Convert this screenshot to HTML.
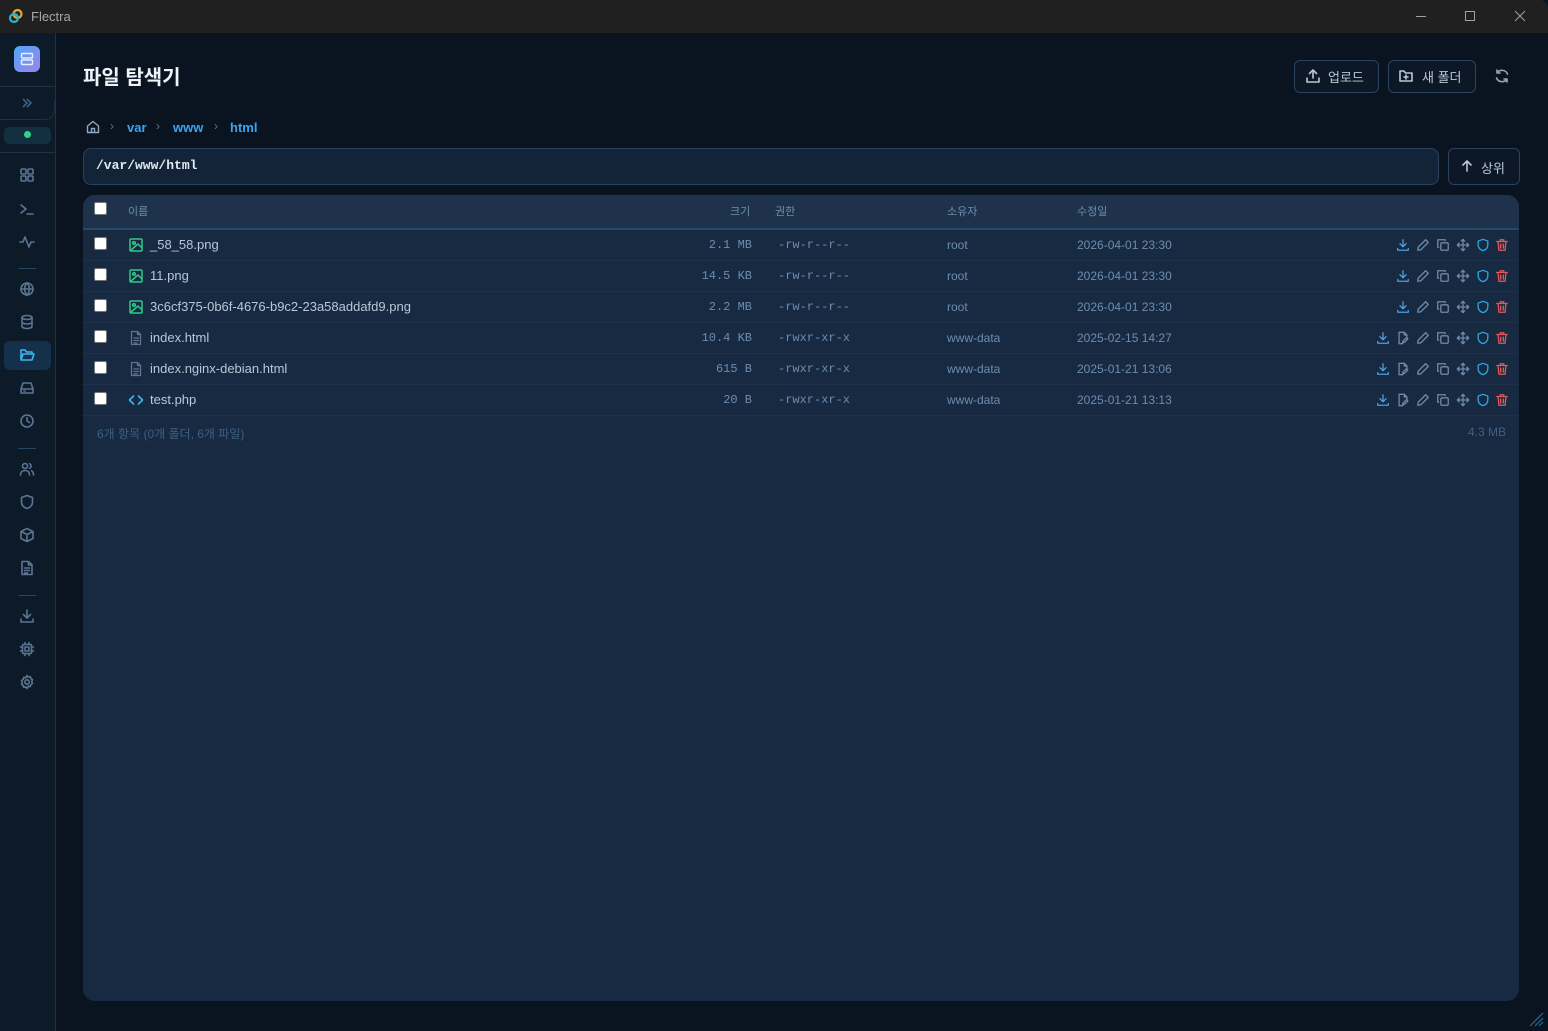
<!DOCTYPE html>
<html><head><meta charset="utf-8">
<style>
*{margin:0;padding:0;box-sizing:border-box}
body{width:1548px;height:1031px;overflow:hidden;background:#0a1420;font-family:"Liberation Sans","Noto Sans CJK KR",sans-serif;position:relative;color:#c8d4e0}
.a{position:absolute}
svg{display:block}
.ic{position:absolute;width:16px;height:16px;fill:none;stroke-width:1.6;stroke-linecap:round;stroke-linejoin:round}
.sb{stroke:#5b7593}
.mono{font-family:"Liberation Mono","DejaVu Sans Mono",monospace}
.row{position:absolute;left:83px;width:1436px;height:31px;border-bottom:1px solid #1d3249}
.cb{position:absolute;left:11px;top:7px;width:13px;height:13px;background:#fff;border:1px solid #777;border-radius:2px}
.nm{position:absolute;left:67px;top:7px;font-size:13px;color:#b9c7d6}
.sz{position:absolute;right:767px;top:8px;font-size:12px;color:#6c8db0}
.pm{position:absolute;left:695px;top:8px;font-size:12px;color:#6c8db0}
.ow{position:absolute;left:864px;top:8px;font-size:12px;color:#6c8db0}
.dt{position:absolute;left:994px;top:8px;font-size:12px;color:#6c8db0}
.btn{position:absolute;border:1px solid #2b4260;border-radius:6px;background:#0c1826;color:#b8c8da;font-size:13px}
</style></head><body>
<div class="a" style="left:0;top:0;width:1548px;height:33px;background:#202020;border-radius:0 8px 0 0"></div>
<svg class="a" style="left:8px;top:8px" width="16" height="16" viewBox="0 0 16 16"><circle cx="9.5" cy="6" r="4" fill="none" stroke="#e2a83a" stroke-width="2.2"/><circle cx="6" cy="10" r="4" fill="none" stroke="#2bb3c8" stroke-width="2.2"/></svg>
<div class="a" style="left:31px;top:9px;font-size:13px;color:#a8a8a8">Flectra</div>
<div class="a" style="left:1416px;top:16px;width:10px;height:1px;background:#a0a0a0"></div>
<div class="a" style="left:1465px;top:11px;width:10px;height:10px;border:1px solid #a0a0a0"></div>
<svg class="a" style="left:1514px;top:10px" width="12" height="12" viewBox="0 0 12 12"><path d="M1 1L11 11M11 1L1 11" stroke="#a0a0a0" stroke-width="1"/></svg>
<div class="a" style="left:0;top:33px;width:56px;height:998px;background:#0d1a28;border-right:1px solid #1e3148"></div>
<div class="a" style="left:14px;top:46px;width:26px;height:26px;border-radius:6px;background:linear-gradient(135deg,#4fa8f5,#9a82f0)"></div>
<svg class="a" style="left:19px;top:51px" width="16" height="16" viewBox="0 0 16 16" fill="none" stroke="#e8eeff" stroke-width="1.4"><rect x="2.5" y="2.5" width="11" height="4.5" rx="1"/><rect x="2.5" y="9" width="11" height="4.5" rx="1"/></svg>
<div class="a" style="left:0;top:86px;width:55px;height:1px;background:#1e3148"></div>
<div class="a" style="left:0;top:100px;width:55px;height:20px;border-bottom:1px solid #1e3148;border-right:1px solid #1e3148;border-radius:0 0 10px 0"></div>
<svg class="a" style="left:21px;top:97px" width="12" height="12" viewBox="0 0 12 12" fill="none" stroke="#3f6a94" stroke-width="1.5"><path d="M2 2l4 4-4 4M6 2l4 4-4 4"/></svg>
<div class="a" style="left:4px;top:127px;width:47px;height:17px;border-radius:5px;background:#12303f"></div>
<div class="a" style="left:24px;top:131px;width:7px;height:7px;border-radius:50%;background:#2ed388"></div>
<div class="a" style="left:0;top:152px;width:55px;height:1px;background:#1e3148"></div>
<div class="a" style="left:18px;top:268px;width:18px;height:1px;background:#284563"></div>
<div class="a" style="left:18px;top:448px;width:18px;height:1px;background:#284563"></div>
<div class="a" style="left:18px;top:595px;width:18px;height:1px;background:#284563"></div>
<div class="a" style="left:4px;top:341px;width:47px;height:29px;border-radius:6px;background:#14304a"></div>
<svg class="ic sb" style="left:19px;top:167px" viewBox="0 0 16 16"><rect x="2" y="2" width="5" height="5" rx="1"/><rect x="9" y="2" width="5" height="5" rx="1"/><rect x="2" y="9" width="5" height="5" rx="1"/><rect x="9" y="9" width="5" height="5" rx="1"/></svg>
<svg class="ic sb" style="left:19px;top:201px" viewBox="0 0 16 16"><path d="M2 4l5 4-5 4M8 13h6"/></svg>
<svg class="ic sb" style="left:19px;top:234px" viewBox="0 0 16 16"><path d="M1 8h3l2-5 4 10 2-5h3"/></svg>
<svg class="ic sb" style="left:19px;top:281px" viewBox="0 0 16 16"><circle cx="8" cy="8" r="6"/><path d="M2 8h12M8 2c3 3 3 9 0 12M8 2c-3 3-3 9 0 12"/></svg>
<svg class="ic sb" style="left:19px;top:314px" viewBox="0 0 16 16"><ellipse cx="8" cy="3.5" rx="5" ry="2"/><path d="M3 3.5v9c0 1.1 2.2 2 5 2s5-.9 5-2v-9M3 8c0 1.1 2.2 2 5 2s5-.9 5-2"/></svg>
<svg class="ic" style="left:19px;top:347px;stroke:#38b6f0" viewBox="0 0 16 16"><path d="M2 13V3h4l1.5 2H13v2M2 13l2-6h11l-2 6z"/></svg>
<svg class="ic sb" style="left:19px;top:380px" viewBox="0 0 16 16"><path d="M2 9l2-6h8l2 6v4H2zM2 9h12M5 11h1"/></svg>
<svg class="ic sb" style="left:19px;top:413px" viewBox="0 0 16 16"><circle cx="8" cy="8" r="6"/><path d="M8 4.5V8l2.5 1.5"/></svg>
<svg class="ic sb" style="left:19px;top:461px" viewBox="0 0 16 16"><circle cx="6" cy="5" r="2.5"/><path d="M1.5 14c0-3 2-4.5 4.5-4.5s4.5 1.5 4.5 4.5M10.5 2.7a2.5 2.5 0 010 4.6M12.5 9.8c1.3.6 2 2 2 4.2"/></svg>
<svg class="ic sb" style="left:19px;top:494px" viewBox="0 0 16 16"><path d="M8 1.5l5.5 2v4.5c0 3.3-2.5 5.5-5.5 6.5C5 13.5 2.5 11.3 2.5 8V3.5z"/></svg>
<svg class="ic sb" style="left:19px;top:527px" viewBox="0 0 16 16"><path d="M8 1.5l6 3v7l-6 3-6-3v-7zM2 4.5l6 3 6-3M8 7.5v7"/></svg>
<svg class="ic sb" style="left:19px;top:560px" viewBox="0 0 16 16"><path d="M3 1.5h6.5l3.5 3.5v9.5H3zM9.5 1.5V5H13M5.5 8h5M5.5 10.5h5M5.5 13h3"/></svg>
<svg class="ic sb" style="left:19px;top:608px" viewBox="0 0 16 16"><path d="M8 2v8M4.5 6.5L8 10l3.5-3.5M2 11v3h12v-3"/></svg>
<svg class="ic sb" style="left:19px;top:641px" viewBox="0 0 16 16"><rect x="3.5" y="3.5" width="9" height="9" rx="1"/><rect x="6" y="6" width="4" height="4"/><path d="M6 1.5v2M10 1.5v2M6 12.5v2M10 12.5v2M1.5 6h2M1.5 10h2M12.5 6h2M12.5 10h2"/></svg>
<svg class="ic sb" style="left:19px;top:674px" viewBox="0 0 16 16"><circle cx="8" cy="8" r="2.2"/><path d="M8 1.5l1.3 1.6 2-.5.5 2 1.7 1.1-.8 1.9.8 1.9-1.7 1.1-.5 2-2-.5L8 14.5l-1.3-1.6-2 .5-.5-2L2.5 10.3l.8-1.9-.8-1.9 1.7-1.1.5-2 2 .5z"/></svg>
<div class="a" style="left:83px;top:61px;font-size:20px;font-weight:bold;color:#eef3f8">파일 탐색기</div>
<div class="btn" style="left:1294px;top:60px;width:85px;height:33px"><span class="a" style="left:33px;top:6px">업로드</span></div>
<svg class="ic" style="left:1305px;top:68px;stroke:#b8c8da" viewBox="0 0 16 16"><path d="M8 10V2M4.5 5.5L8 2l3.5 3.5M2 10v4h12v-4"/></svg>
<div class="btn" style="left:1388px;top:60px;width:88px;height:33px"><span class="a" style="left:33px;top:6px">새 폴더</span></div>
<svg class="ic" style="left:1398px;top:68px;stroke:#b8c8da" viewBox="0 0 16 16"><path d="M2 13V3h4l1.5 2H14v8zM8 7v4M6 9h4"/></svg>
<svg class="ic" style="left:1494px;top:68px;stroke:#8fa6bf" viewBox="0 0 16 16"><path d="M13.5 6A6 6 0 003 5M2.5 10A6 6 0 0013 11M3 2v3h3M13 14v-3h-3"/></svg>
<svg class="ic" style="left:85px;top:119px;stroke:#8fa6bf;stroke-width:1.4" viewBox="0 0 16 16"><path d="M2.5 7L8 2.5 13.5 7v6.5h-11zM6.5 13.5v-4h3v4"/></svg>
<div class="a" style="left:110px;top:119px;font-size:12px;color:#5b7593">›</div>
<div class="a" style="left:127px;top:120px;font-size:13px;font-weight:bold;color:#38a6ee">var</div>
<div class="a" style="left:156px;top:119px;font-size:12px;color:#5b7593">›</div>
<div class="a" style="left:173px;top:120px;font-size:13px;font-weight:bold;color:#38a6ee">www</div>
<div class="a" style="left:214px;top:119px;font-size:12px;color:#5b7593">›</div>
<div class="a" style="left:230px;top:120px;font-size:13px;font-weight:bold;color:#38a6ee">html</div>
<div class="a" style="left:83px;top:148px;width:1356px;height:37px;border:1px solid #2a4260;border-radius:8px;background:#132438"></div>
<div class="a mono" style="left:96px;top:158px;font-size:13px;font-weight:bold;color:#e2eaf3">/var/www/html</div>
<div class="btn" style="left:1448px;top:148px;width:72px;height:37px"><span class="a" style="left:32px;top:9px">상위</span></div>
<svg class="ic" style="left:1459px;top:158px;stroke:#b8c8da" viewBox="0 0 16 16"><path d="M8 13V3M4 7l4-4 4 4"/></svg>
<div class="a" style="left:83px;top:195px;width:1436px;height:806px;border-radius:12px;background:#172a42;overflow:hidden">
<div class="a" style="left:0;top:0;width:1436px;height:35px;background:#1e334b;border-bottom:2px solid #284868"></div>
</div>
<div class="a" style="left:94px;top:202px;width:13px;height:13px;background:#fff;border:1px solid #777;border-radius:2px"></div>
<div class="a" style="left:128px;top:203px;font-size:11px;color:#6c8db0">이름</div>
<div class="a" style="left:730px;top:203px;font-size:11px;color:#6c8db0">크기</div>
<div class="a" style="left:775px;top:203px;font-size:11px;color:#6c8db0">권한</div>
<div class="a" style="left:947px;top:203px;font-size:11px;color:#6c8db0">소유자</div>
<div class="a" style="left:1077px;top:203px;font-size:11px;color:#6c8db0">수정일</div>
<div id="rows"></div>
<script>
var img='<svg class="ic" style="left:45px;top:7px;stroke:#2ec98a;stroke-width:1.5" viewBox="0 0 16 16"><rect x="2" y="2" width="12" height="12" rx="1"/><circle cx="6" cy="6" r="1.3"/><path d="M2.5 13.5L10 7l3.5 3.5"/></svg>';
var doc='<svg class="ic" style="left:45px;top:7px;stroke:#5b7593;stroke-width:1.3" viewBox="0 0 16 16"><path d="M3.5 1.5h6l3 3v10h-9zM9.5 1.5v3h3M6 8h4.5M6 10.5h4.5M6 13h3"/></svg>';
var code='<svg class="ic" style="left:45px;top:7px;stroke:#38b6f0;stroke-width:1.6" viewBox="0 0 16 16"><path d="M5.5 4L1.5 8l4 4M10.5 4l4 4-4 4"/></svg>';
var R=[["_58_58.png","2.1 MB","-rw-r--r--","root","2026-04-01 23:30",img,0],
["11.png","14.5 KB","-rw-r--r--","root","2026-04-01 23:30",img,0],
["3c6cf375-0b6f-4676-b9c2-23a58addafd9.png","2.2 MB","-rw-r--r--","root","2026-04-01 23:30",img,0],
["index.html","10.4 KB","-rwxr-xr-x","www-data","2025-02-15 14:27",doc,1],
["index.nginx-debian.html","615 B","-rwxr-xr-x","www-data","2025-01-21 13:06",doc,1],
["test.php","20 B","-rwxr-xr-x","www-data","2025-01-21 13:13",code,1]];
function ic(x,c,d){return '<svg class="ic" style="left:'+x+'px;top:8px;width:14px;height:14px;stroke:'+c+';stroke-width:1.5" viewBox="0 0 16 16">'+d+'</svg>';}
var DL='<path d="M8 2v8M4.5 6.5L8 10l3.5-3.5M2 12v2h12v-2"/>',FE='<path d="M9.5 1.5h-6v13h4M9.5 1.5l3 3v3M9.5 1.5v3h3M13.5 9l-4 4-2 .5.5-2 4-4z"/>',PE='<path d="M11 2l3 3-8.5 8.5L2 14l.5-3.5z"/>',CP='<rect x="5.5" y="5.5" width="8.5" height="8.5" rx="1.5"/><path d="M10.5 3V2H2v8.5h1"/>',MV='<path d="M8 1.5v13M1.5 8h13M6 3.5l2-2 2 2M6 12.5l2 2 2-2M3.5 6l-2 2 2 2M12.5 6l2 2-2 2"/>',SH='<path d="M8 1.5l5.5 2v4.5c0 3.3-2.5 5.5-5.5 6.5C5 13.5 2.5 11.3 2.5 8V3.5z"/>',TR='<path d="M2 4h12M6 4V2h4v2M3.5 4l1 10h7l1-10M6.5 7v4.5M9.5 7v4.5"/>';
var h='';
R.forEach(function(r,i){
var t=230+i*31;
var a='';
if(r[6]){a+=ic(1293,'#4a9fe0',DL)+ic(1313,'#6f8aa8',FE);}else{a+=ic(1313,'#4a9fe0',DL);}
a+=ic(1333,'#6f8aa8',PE)+ic(1353,'#6f8aa8',CP)+ic(1373,'#6f8aa8',MV)+ic(1393,'#2ba8e0',SH)+ic(1412,'#e05a5a',TR);
h+='<div class="row" style="top:'+t+'px"><div class="cb"></div>'+r[5]+'<div class="nm">'+r[0]+'</div><div class="sz mono">'+r[1]+'</div><div class="pm mono">'+r[2]+'</div><div class="ow">'+r[3]+'</div><div class="dt">'+r[4]+'</div>'+a+'</div>';
});
document.getElementById('rows').outerHTML=h;
</script>
<div class="a" style="left:97px;top:425px;font-size:12px;color:#3d5f82">6개 항목 (0개 폴더, 6개 파일)</div>
<div class="a" style="left:1468px;top:425px;font-size:12px;color:#3d5f82">4.3 MB</div>
<svg class="a" style="left:1528px;top:1011px" width="16" height="16" viewBox="0 0 16 16" stroke="#2b6a9a" stroke-width="1.2"><path d="M15 2L2 15M15 7L7 15M15 11l-4 4"/></svg>
</body></html>
